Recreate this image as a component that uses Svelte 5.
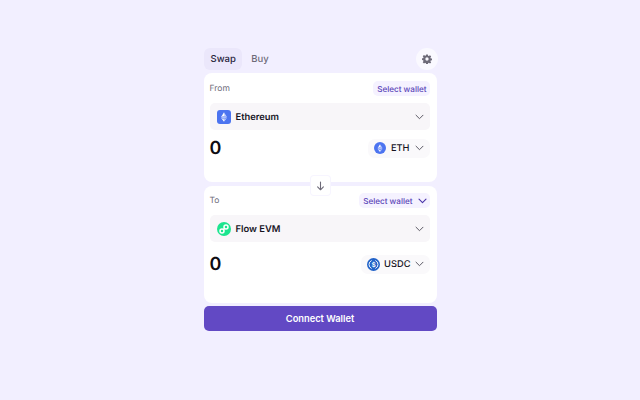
<script>
  const iconChevron = "M1 1.200l3.500 3.500 3.500-3.500";
</script>

{#snippet chevron(cls)}
  <svg class="chev {cls}" width="9" height="6" viewBox="0 0 9 6" fill="none"><path d={iconChevron} stroke="currentColor" stroke-linecap="round" stroke-linejoin="round"/></svg>
{/snippet}

{#snippet ethGlyph(size)}
  <svg width={size} height={size} viewBox="0 0 16 16">
    <path d="M8 1.800v4.700l4 1.700z" fill="#c9d4fb"/>
    <path d="M8 1.800L4 8.200l4-1.700z" fill="#fff"/>
    <path d="M8 6.500L4 8.200l4 2.400 4-2.400z" fill="#aebffa"/>
    <path d="M8 11.400L4 9l4 5.400z" fill="#fff"/>
    <path d="M8 11.400V14.400L12 9z" fill="#c9d4fb"/>
  </svg>
{/snippet}

<div class="page">
  <div class="widget">
    <div class="top">
      <div class="tabs">
        <span class="tab active">Swap</span>
        <span class="tab">Buy</span>
      </div>
      <button class="gear" aria-label="Settings">
        <svg width="10" height="10" viewBox="0 0 24 24" fill="#6d6a78"><path fill-rule="evenodd" d="M10 1h4l.6 3.100 1.900.8 2.700-1.800 2.800 2.800-1.800 2.600.8 2 3 .5v4l-3 .6-.8 1.900 1.800 2.700-2.800 2.800-2.700-1.800-1.900.8-.6 3.100h-4l-.6-3.100-1.900-.8-2.700 1.800L1.800 19.700l1.800-2.700-.8-1.900-3-.6v-4l3-.5.8-2-1.800-2.600L4.600 2.600l2.700 1.800 2.100-.8zM12 8a4 4 0 100 8 4 4 0 000-8z"/></svg>
      </button>
    </div>

    <section class="card from">
      <div class="head">
        <span class="label">From</span>
        <span class="wallet">Select wallet</span>
      </div>
      <div class="chain">
        <span class="chain-icon eth">{@render ethGlyph(12)}</span>
        <span class="chain-name">Ethereum</span>
        {@render chevron("right")}
      </div>
      <div class="amount-row">
        <span class="amount">0</span>
        <div class="token">
          <span class="token-icon eth-round">{@render ethGlyph(10)}</span>
          <span class="token-name">ETH</span>
          {@render chevron("")}
        </div>
      </div>
    </section>

    <section class="card to">
      <button class="flip" aria-label="Flip">
        <svg width="9" height="10" viewBox="0 0 10 11" fill="none"><path d="M5 1v8.500M1.800 6.500L5 9.700l3.200-3.200" stroke="#6d6a78" stroke-width="1.200" stroke-linecap="round" stroke-linejoin="round"/></svg>
      </button>
      <div class="head">
        <span class="label">To</span>
        <span class="wallet more">Select wallet {@render chevron("purple")}</span>
      </div>
      <div class="chain">
        <span class="chain-icon flow">
          <svg width="14" height="14" viewBox="0 0 14 14" fill="none">
            <circle cx="5" cy="9" r="2" stroke="#fff" stroke-width="1.500"/>
            <circle cx="9" cy="5" r="2" stroke="#fff" stroke-width="1.500"/>
            <path d="M6.500 7.500l1-1" stroke="#fff" stroke-width="1.500"/>
          </svg>
        </span>
        <span class="chain-name">Flow EVM</span>
        {@render chevron("right")}
      </div>
      <div class="amount-row tall">
        <span class="amount">0</span>
        <div class="token usdc-pill">
          <span class="token-icon usdc">
            <svg width="13" height="13" viewBox="0 0 14 14" fill="none">
              <path d="M5 2.700a4.700 4.700 0 000 8.600M9 2.700a4.700 4.700 0 010 8.600" stroke="#fff"/>
              <text x="7" y="9.600" text-anchor="middle" font-size="7" font-weight="600" fill="#fff" font-family="Inter, sans-serif">$</text>
            </svg>
          </span>
          <span class="token-name">USDC</span>
          {@render chevron("")}
        </div>
      </div>
    </section>

    <button class="connect">Connect Wallet</button>
  </div>
</div>

<style>
  :global(body) {
    margin: 0;
    background: #f2efff;
  }

  .page {
    height: 400px;
    box-sizing: border-box;
    padding-top: 48px;
    display: flex;
    justify-content: center;
    font-family: Inter, "Liberation Sans", sans-serif;
    text-rendering: geometricPrecision;
    color: #16141f;
  }

  .widget {
    width: 233px;
    display: flex;
    flex-direction: column;
  }

  .top {
    height: 22px;
    margin-bottom: 3px;
    display: flex;
    justify-content: space-between;
    align-items: flex-start;
  }

  .tabs {
    display: flex;
    gap: 2px;
  }

  .tab {
    height: 22px;
    padding: 0 6.500px 0 7px;
    border-radius: 6px;
    font-size: 9.500px;
    font-weight: 500;
    line-height: 23px;
    color: #6d6a78;
  }

  .tab.active {
    background: #ebe7fb;
    color: #26233a;
  }

  .gear {
    width: 22px;
    height: 22px;
    margin-right: -1px;
    padding: 0;
    border: 0;
    border-radius: 50%;
    background: #faf9ff;
    display: flex;
    align-items: center;
    justify-content: center;
  }

  .card {
    position: relative;
    box-sizing: border-box;
    background: #fff;
    border-radius: 8px;
    padding: 8px 7px 0 6px;
  }

  .from {
    height: 109px;
    margin-bottom: 4px;
  }

  .to {
    height: 117px;
    margin-bottom: 3px;
    padding-top: 7px;
  }

  .head {
    height: 15px;
    display: flex;
    justify-content: space-between;
    align-items: center;
  }

  .label {
    font-size: 8.500px;
    color: #6d6a78;
  }

  .wallet {
    height: 15px;
    padding: 0 3px 0 4px;
    border-radius: 5px;
    background: #f5f2ff;
    font-size: 8.100px;
    line-height: 14px;
    font-weight: 500;
    color: #5b46b8;
    display: flex;
    align-items: center;
    gap: 5px;
  }

  .chain {
    height: 27px;
    margin-top: 7px;
    padding: 0 6px 0 7px;
    border-radius: 5px;
    background: #f8f6f9;
    display: flex;
    align-items: center;
    gap: 5px;
  }

  .chain-name {
    padding-top: 1px;
    font-size: 9.400px;
    font-weight: 600;
  }

  .chain-icon {
    width: 14px;
    height: 14px;
    display: flex;
    align-items: center;
    justify-content: center;
  }

  .eth {
    background: #4c74f0;
    border-radius: 3px;
  }

  .flow {
    background: #1ce58f;
    border-radius: 50%;
  }

  .chev {
    color: #5d5b66;
    flex-shrink: 0;
  }

  .right {
    margin-left: auto;
  }

  .purple {
    color: #4a35a8;
    stroke-width: 1.100;
  }

  .amount-row {
    height: 24px;
    margin-top: 6px;
    display: flex;
    justify-content: space-between;
    align-items: center;
  }

  .amount-row.tall {
    margin-top: 10px;
  }

  .amount {
    font-size: 18px;
    font-weight: 600;
    color: #0d0c12;
  }

  .token {
    height: 19px;
    padding: 0 6px;
    border-radius: 7px;
    background: #faf9fb;
    display: flex;
    align-items: center;
    gap: 5px;
  }

  .token-name {
    padding-top: 1px;
    font-size: 9.300px;
    font-weight: 500;
  }

  .token-icon {
    width: 12px;
    height: 12px;
    border-radius: 50%;
    display: flex;
    align-items: center;
    justify-content: center;
  }

  .eth-round {
    background: #4c74f0;
  }

  .usdc-pill {
    gap: 4px;
  }

  .usdc {
    width: 13px;
    height: 13px;
    background: #2263c8;
  }

  .flip {
    position: absolute;
    left: 107px;
    top: -10px;
    width: 19px;
    height: 19px;
    padding: 0;
    border: 0;
    border-radius: 3px;
    background: #fff;
    box-shadow: 0 0 0 1px #f7f5ff;
    display: flex;
    align-items: center;
    justify-content: center;
  }

  .connect {
    height: 25px;
    padding: 0;
    border: 0;
    border-radius: 5px;
    background: #6249c4;
    color: #fff;
    font-family: inherit;
    font-size: 9.300px;
    font-weight: 600;
  }
</style>
